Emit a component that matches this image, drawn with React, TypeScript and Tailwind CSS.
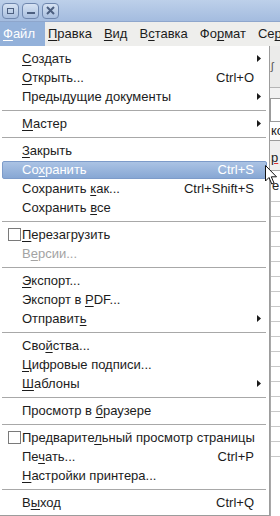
import React from "react";

type Item =
  | { kind: "sep" }
  | {
      kind: "item";
      pre: string;
      u: string;
      post: string;
      shortcut?: string;
      sub?: boolean;
      check?: boolean;
      disabled?: boolean;
      active?: boolean;
    };

const items: Item[] = [
  { kind: "item", pre: "", u: "С", post: "оздать", sub: true },
  { kind: "item", pre: "", u: "О", post: "ткрыть...", shortcut: "Ctrl+O" },
  { kind: "item", pre: "Предыдущие ", u: "д", post: "окументы", sub: true },
  { kind: "sep" },
  { kind: "item", pre: "", u: "М", post: "астер", sub: true },
  { kind: "sep" },
  { kind: "item", pre: "", u: "З", post: "акрыть" },
  { kind: "item", pre: "Со", u: "х", post: "ранить", shortcut: "Ctrl+S", active: true },
  { kind: "item", pre: "Сохранить ", u: "к", post: "ак...", shortcut: "Ctrl+Shift+S" },
  { kind: "item", pre: "Сохранить ", u: "в", post: "се" },
  { kind: "sep" },
  { kind: "item", pre: "", u: "П", post: "ерезагрузить", check: true },
  { kind: "item", pre: "В", u: "е", post: "рсии...", disabled: true },
  { kind: "sep" },
  { kind: "item", pre: "", u: "Э", post: "кспорт..." },
  { kind: "item", pre: "Экспорт в ", u: "P", post: "DF..." },
  { kind: "item", pre: "Отправит", u: "ь", post: "", sub: true },
  { kind: "sep" },
  { kind: "item", pre: "Сво", u: "й", post: "ства..." },
  { kind: "item", pre: "", u: "Ц", post: "ифровые подписи..." },
  { kind: "item", pre: "", u: "Ш", post: "аблоны", sub: true },
  { kind: "sep" },
  { kind: "item", pre: "Просмотр в ", u: "б", post: "раузере" },
  { kind: "sep" },
  { kind: "item", pre: "Предварите", u: "л", post: "ьный просмотр страницы", check: true },
  { kind: "item", pre: "Пе", u: "ч", post: "ать...", shortcut: "Ctrl+P" },
  { kind: "item", pre: "", u: "Н", post: "астройки принтера..." },
  { kind: "sep" },
  { kind: "item", pre: "В", u: "ы", post: "ход", shortcut: "Ctrl+Q" },
];

const font = { fontFamily: '"Liberation Sans", Arial, sans-serif' };

function Arrow({ white }: { white?: boolean }) {
  return (
    <svg width="4" height="7" viewBox="0 0 4 7">
      <path d="M0 0 L4 3.5 L0 7 Z" fill={white ? "#fff" : "#1a1a1a"} />
    </svg>
  );
}

function MenuRow({ it }: { it: Extract<Item, { kind: "item" }> }) {
  const color = it.active ? "text-white" : it.disabled ? "text-[#a3a3a3]" : "text-[#1c1c1c]";
  return (
    <div className="h-[19px] flex items-center px-[2px]">
      <div
        className={
          "flex-1 h-[18px] flex items-center rounded-[2px] " +
          (it.active
            ? "bg-gradient-to-b from-[#abc3e4] to-[#87a7d4] border border-[#7d9bc9]"
            : "border border-transparent")
        }
      >
        <div className="w-[19px] flex items-center justify-end pr-[1px] shrink-0">
          {it.check ? (
            <div className="w-[13px] h-[13px] border border-[#7a7a7a] bg-white" />
          ) : null}
        </div>
        <div className={"flex-1 whitespace-nowrap text-[13px] leading-none " + color}>
          {it.pre}
          <span className="underline underline-offset-2">{it.u}</span>
          {it.post}
        </div>
        {it.shortcut ? (
          <div className={"whitespace-nowrap text-[13px] leading-none " + color}>{it.shortcut}</div>
        ) : null}
        <div className="w-[12px] shrink-0 flex items-center pl-[3px]">
          {it.sub ? <Arrow white={it.active} /> : null}
        </div>
      </div>
    </div>
  );
}

function WinButton({ children }: { children: React.ReactNode }) {
  return (
    <div className="w-[17px] h-[16px] rounded-[4px] border border-[#6f87ae] bg-gradient-to-b from-[#d7e3f3] to-[#a9bfdf] flex items-center justify-center">
      {children}
    </div>
  );
}

const menuBar: { pre: string; u: string; post: string }[] = [
  { pre: "", u: "П", post: "равка" },
  { pre: "", u: "В", post: "ид" },
  { pre: "В", u: "с", post: "тавка" },
  { pre: "Фо", u: "р", post: "мат" },
  { pre: "Се", u: "р", post: "вис" },
];

export default function App() {
  return (
    <div className="w-[280px] h-[516px] overflow-hidden bg-white flex flex-col" style={font}>
      {/* title bar */}
      <div className="h-[22px] shrink-0 bg-gradient-to-b from-[#bdd0ea] to-[#a4bcdf] flex items-center gap-[3px] pl-[2px] border-b border-[#8ea6cc]">
        <WinButton>
          <div className="w-[7px] h-[6px] border border-[#4c5f80]" />
        </WinButton>
        <WinButton>
          <div className="w-[8px] h-[2px] bg-[#4c5f80] mt-[5px]" />
        </WinButton>
        <WinButton>
          <svg width="9" height="9" viewBox="0 0 9 9">
            <path d="M1 1 L8 8 M8 1 L1 8" stroke="#4c5f80" strokeWidth="2" />
          </svg>
        </WinButton>
      </div>
      {/* menu bar */}
      <div className="h-[24px] shrink-0 bg-[#eeeeec] flex items-stretch text-[13px] text-[#1c1c1c] whitespace-nowrap overflow-hidden">
        <div className="w-[45px] shrink-0 bg-[#93b1da] text-white flex items-center pl-[3px]">
          <span className="underline underline-offset-2">Ф</span>айл
        </div>
        <div className="flex items-center gap-[12px] pl-[3px]">
          {menuBar.map((m, i) => (
            <span key={i}>
              {m.pre}
              <span className="underline underline-offset-2">{m.u}</span>
              {m.post}
            </span>
          ))}
        </div>
      </div>
      {/* document area with overlay menu */}
      <div className="relative flex-1 flex flex-col">
        {/* background document */}
        <div className="flex-1 flex flex-col pl-[270px]">
          <div className="h-[42px] bg-[#ebebea] border-b border-[#b5b5b5] flex items-center">
            <span className="text-[#555] text-[11px] pl-[1px]">ʃ</span>
          </div>
          <div className="h-[10px] bg-[#f2f2f2]" />
          <div className="h-[24px] bg-white border-y border-[#9b9b9b] border-l" />
          <div className="h-[18px] bg-white text-[13px] text-[#222] leading-[18px] pl-[1px]">ко</div>
          <div className="h-[30px] bg-[#efefef] border-t border-[#9b9b9b] text-[13px] text-[#222] leading-[34px] pl-[1px]">
            <span className="underline decoration-[#d33]">р</span>
          </div>
          <div className="flex-1 flex flex-col border-l border-[#a8a8a8] border-t border-t-[#a8a8a8]">
            <div className="h-[30px] text-[13px] text-[#222] leading-[30px] pl-[1px]">е</div>
            {Array.from({ length: 18 }).map((_, i) => (
              <div key={i} className="h-[15px] border-t border-[#c8c8c8]" />
            ))}
          </div>
        </div>
        {/* dropdown menu */}
        <div className="absolute left-0 top-0 w-[270px] bg-white border-r border-b border-[#9c9c9c] pt-[3px] pb-[3px] flex flex-col">
          {items.map((it, i) =>
            it.kind === "sep" ? (
              <div key={i} className="h-[8px] flex items-center pl-[2px] pr-[3px]">
                <div className="flex-1 h-px bg-[#a8a8a8]" />
              </div>
            ) : (
              <MenuRow key={i} it={it} />
            )
          )}
        </div>
        {/* mouse cursor */}
        <svg
          className="absolute left-[265px] top-[119px]"
          width="14"
          height="22"
          viewBox="0 0 14 22"
        >
          <path
            d="M0.5 0.5 L0.5 16 L4 12.5 L6.8 19 L9 18 L6.3 11.8 L11.5 11.8 Z"
            fill="#fff"
            stroke="#111"
            strokeWidth="1"
          />
        </svg>
      </div>
    </div>
  );
}
